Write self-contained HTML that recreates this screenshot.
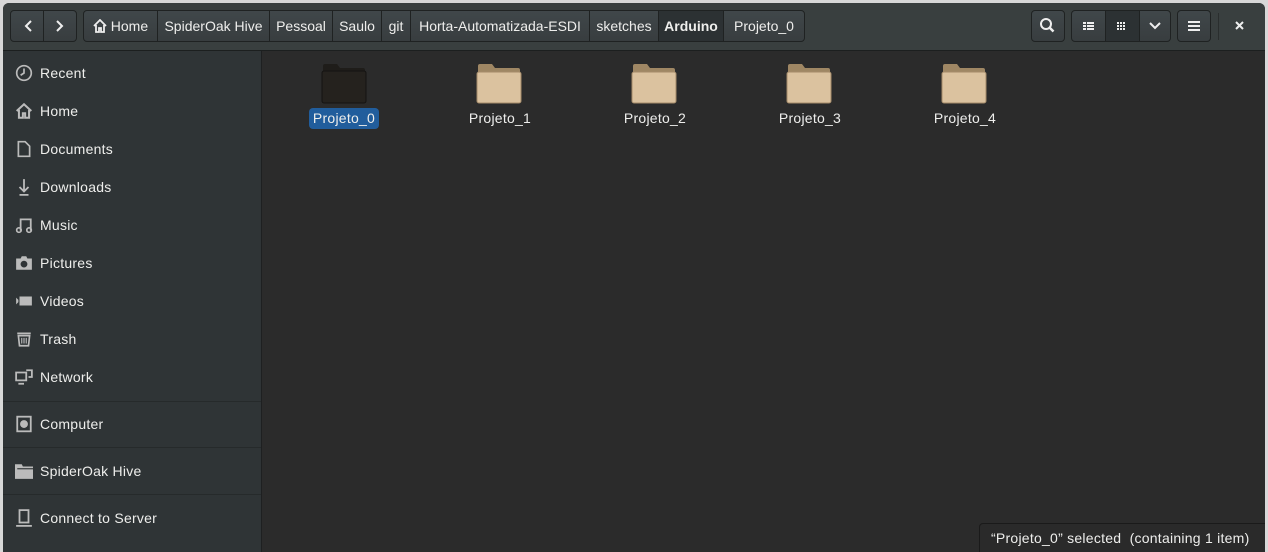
<!DOCTYPE html><html><head><style>
body{margin:0;width:1268px;height:552px;background:#d8d8d8;position:relative;overflow:hidden;font-family:"Liberation Sans","DejaVu Sans",sans-serif;font-size:14px;color:#eeeeec;letter-spacing:0.25px}
.win{position:absolute;left:3px;top:3px;width:1262px;height:549px;background:#2b2b2b;border-radius:6px 6px 0 0;overflow:hidden}
.hb{position:absolute;left:0;top:0;width:1262px;height:47px;background:#393f3f;border-bottom:1px solid #1c1f1f}
.btn{position:absolute;top:7px;height:32px;background:#3a4040;border:1px solid #1f2222;border-radius:4px;box-sizing:border-box;background:linear-gradient(#40474a,#383d3f)}
.seg{position:absolute;top:0;height:30px;line-height:30px;border-right:1px solid #1f2222;text-align:center;box-sizing:border-box;font-size:14px;letter-spacing:0}
.side{position:absolute;left:0;top:48px;width:258px;height:501px;background:#2f3436;border-right:1px solid #1e2021}
.it{position:absolute;left:37px;font-size:14px;color:#eeeeec;line-height:16px}
.ic{position:absolute;left:12px;width:18px;height:18px}
.sep{position:absolute;left:0;width:258px;height:1px;background:#262a2b}
.f{position:absolute;top:59px;width:46px;height:42px}
.lbl{position:absolute;top:105px;height:21px;line-height:21px;text-align:center;width:100px}
</style></head><body>
<div class="win">
<div class="hb">
 <div class="btn" style="left:7px;width:67px">
  <div style="position:absolute;left:32px;top:0;width:1px;height:30px;background:#1f2222"></div>
  <svg width="67" height="30" style="position:absolute;left:0;top:0"><path d="M20 10l-5 5 5 5M46 10l5 5-5 5" stroke="#eee" stroke-width="2" fill="none"/></svg>
 </div>
 <div class="btn" style="left:80px;width:722px">
  <div class="seg" style="left:0;width:74px"><svg width="14" height="14" style="vertical-align:-2px" viewBox="0 0 14 14"><path d="M1 7L7 1l6 6M3 6v7h3V9h2v4h3V6" stroke="#eee" stroke-width="1.8" fill="none"/></svg> Home</div>
  <div class="seg" style="left:74px;width:112px">SpiderOak Hive</div>
  <div class="seg" style="left:186px;width:63px">Pessoal</div>
  <div class="seg" style="left:249px;width:49px">Saulo</div>
  <div class="seg" style="left:298px;width:29px">git</div>
  <div class="seg" style="left:327px;width:179px">Horta-Automatizada-ESDI</div>
  <div class="seg" style="left:506px;width:69px">sketches</div>
  <div class="seg" style="left:575px;width:65px;background:#2c3133;font-weight:bold">Arduino</div>
  <div class="seg" style="left:640px;width:80px;border:none">Projeto_0</div>
 </div>
 <div class="btn" style="left:1028px;width:34px"><svg width="32" height="30"><circle cx="14" cy="13" r="5" stroke="#eee" stroke-width="2" fill="none"/><path d="M17.5 16.5l4 4" stroke="#eee" stroke-width="2.5"/></svg></div>
 <div class="btn" style="left:1068px;width:100px">
  <div style="position:absolute;left:33px;top:0;width:33px;height:30px;background:#2c3133;border-left:1px solid #1f2222;border-right:1px solid #1f2222"></div>
  <svg width="100" height="30" style="position:absolute;left:0;top:0"><g fill="#eee"><rect x="11" y="11" width="3" height="2"/><rect x="15" y="11" width="7" height="2"/><rect x="11" y="14" width="3" height="2"/><rect x="15" y="14" width="7" height="2"/><rect x="11" y="17" width="3" height="2"/><rect x="15" y="17" width="7" height="2"/>
  <rect x="45" y="11" width="2" height="2"/><rect x="48" y="11" width="2" height="2"/><rect x="51" y="11" width="2" height="2"/><rect x="45" y="14" width="2" height="2"/><rect x="48" y="14" width="2" height="2"/><rect x="51" y="14" width="2" height="2"/><rect x="45" y="17" width="2" height="2"/><rect x="48" y="17" width="2" height="2"/><rect x="51" y="17" width="2" height="2"/></g>
  <path d="M78 12l5 5 5-5" stroke="#eee" stroke-width="2" fill="none"/></svg>
 </div>
 <div class="btn" style="left:1174px;width:34px"><svg width="32" height="30"><g fill="#eee"><rect x="10" y="10" width="12" height="2"/><rect x="10" y="14" width="12" height="2"/><rect x="10" y="18" width="12" height="2"/></g></svg></div>
 <div style="position:absolute;left:1215px;top:10px;width:1px;height:27px;background:#2a2e2e"></div>
 <svg width="20" height="20" style="position:absolute;left:1228px;top:14px"><path d="M5 5l7 7M12 5l-7 7" stroke="#eee" stroke-width="2"/></svg>
</div>
<div class="side">
 <svg class="ic" style="top:13px" viewBox="0 0 16 16"><circle cx="8" cy="8" r="6.5" stroke="#bbb" stroke-width="1.5" fill="none"/><path d="M8 4v4l-3 2" stroke="#bbb" stroke-width="1.5" fill="none"/></svg><div class="it" style="top:14px">Recent</div>
 <svg class="ic" style="top:51px" viewBox="0 0 16 16"><path d="M1.5 8L8 2l6.5 6M3.5 7v7h3.5v-4h2v4h3.5V7" stroke="#bbb" stroke-width="1.8" fill="none"/></svg><div class="it" style="top:52px">Home</div>
 <svg class="ic" style="top:89px" viewBox="0 0 16 16"><path d="M3 1.5h6l4 4v9H3z" stroke="#bbb" stroke-width="1.5" fill="none"/></svg><div class="it" style="top:90px">Documents</div>
 <svg class="ic" style="top:127px" viewBox="0 0 16 16"><path d="M8 1v11M4 8l4 4 4-4M4 15h8" stroke="#bbb" stroke-width="1.6" fill="none"/></svg><div class="it" style="top:128px">Downloads</div>
 <svg class="ic" style="top:165px" viewBox="0 0 16 16"><path d="M5 13V3h9v10" stroke="#bbb" stroke-width="1.6" fill="none"/><circle cx="3.5" cy="12.5" r="2" stroke="#bbb" stroke-width="1.5" fill="none"/><circle cx="12.5" cy="12.5" r="2" stroke="#bbb" stroke-width="1.5" fill="none"/></svg><div class="it" style="top:166px">Music</div>
 <svg class="ic" style="top:203px" viewBox="0 0 16 16"><path d="M1 4h4l1-2h4l1 2h4v10H1z" fill="#bbb"/><circle cx="8" cy="9" r="3" fill="#2f3436"/></svg><div class="it" style="top:204px">Pictures</div>
 <svg class="ic" style="top:241px" viewBox="0 0 16 16"><path d="M1 5v6l2-2V7zM4 4h11v8H4z" fill="#bbb"/></svg><div class="it" style="top:242px">Videos</div>
 <svg class="ic" style="top:279px" viewBox="0 0 16 16"><path d="M2 3h12M3 5h10l-1 9H4z" stroke="#bbb" stroke-width="1.5" fill="none"/><path d="M6 7v5M8 7v5M10 7v5" stroke="#bbb"/></svg><div class="it" style="top:280px">Trash</div>
 <svg class="ic" style="top:317px" viewBox="0 0 16 16"><path d="M1 4h9v7H1zM10 2h5v6h-3" stroke="#bbb" stroke-width="1.6" fill="none"/><path d="M3 14h5" stroke="#bbb" stroke-width="1.6"/></svg><div class="it" style="top:318px">Network</div>
 <div class="sep" style="top:350px"></div>
 <svg class="ic" style="top:364px" viewBox="0 0 16 16"><rect x="2" y="1.5" width="12" height="13" stroke="#bbb" stroke-width="1.6" fill="none"/><circle cx="8" cy="8" r="3.5" fill="#bbb"/></svg><div class="it" style="top:365px">Computer</div>
 <div class="sep" style="top:396px"></div>
 <svg class="ic" style="top:411px" viewBox="0 0 16 16"><path d="M0 2h6l1 2h9v11H0z" fill="#bbb"/><path d="M2 6h14" stroke="#2f3436"/></svg><div class="it" style="top:412px">SpiderOak Hive</div>
 <div class="sep" style="top:443px"></div>
 <svg class="ic" style="top:458px" viewBox="0 0 16 16"><rect x="4" y="1" width="8" height="11" stroke="#bbb" stroke-width="1.6" fill="none"/><path d="M1 15h14" stroke="#bbb" stroke-width="1.6"/></svg><div class="it" style="top:459px">Connect to Server</div>
</div>
<svg class="f" style="left:318px" viewBox="0 0 46 42"><path d="M2 4q0-2 2-2h12l3 4h23q2 0 2 2v4H2z" fill="#1f1d1a"/><rect x="1" y="9" width="44" height="32" rx="2" fill="#25221e" stroke="#141311"/></svg>
<svg class="f" style="left:473px" viewBox="0 0 46 42"><path d="M2 4q0-2 2-2h12l3 4h23q2 0 2 2v6H2z" fill="#9f8764"/><rect x="1" y="10" width="44" height="31" rx="2" fill="#dbc29f" stroke="#a48b6a"/></svg>
<svg class="f" style="left:628px" viewBox="0 0 46 42"><path d="M2 4q0-2 2-2h12l3 4h23q2 0 2 2v6H2z" fill="#9f8764"/><rect x="1" y="10" width="44" height="31" rx="2" fill="#dbc29f" stroke="#a48b6a"/></svg>
<svg class="f" style="left:783px" viewBox="0 0 46 42"><path d="M2 4q0-2 2-2h12l3 4h23q2 0 2 2v6H2z" fill="#9f8764"/><rect x="1" y="10" width="44" height="31" rx="2" fill="#dbc29f" stroke="#a48b6a"/></svg>
<svg class="f" style="left:938px" viewBox="0 0 46 42"><path d="M2 4q0-2 2-2h12l3 4h23q2 0 2 2v6H2z" fill="#9f8764"/><rect x="1" y="10" width="44" height="31" rx="2" fill="#dbc29f" stroke="#a48b6a"/></svg>
<div class="lbl" style="left:306px;width:70px;background:#215d9c;border-radius:4px">Projeto_0</div>
<div class="lbl" style="left:447px">Projeto_1</div>
<div class="lbl" style="left:602px">Projeto_2</div>
<div class="lbl" style="left:757px">Projeto_3</div>
<div class="lbl" style="left:912px">Projeto_4</div>
<div style="position:absolute;left:976px;top:520px;width:290px;height:32px;background:#2a2a2a;border:1px solid #1a1a1a;border-radius:4px 0 0 0;box-sizing:border-box;padding:6px 0 0 11px;font-size:14px">“Projeto_0” selected&nbsp; (containing 1 item)</div>
</div>
</body></html>
